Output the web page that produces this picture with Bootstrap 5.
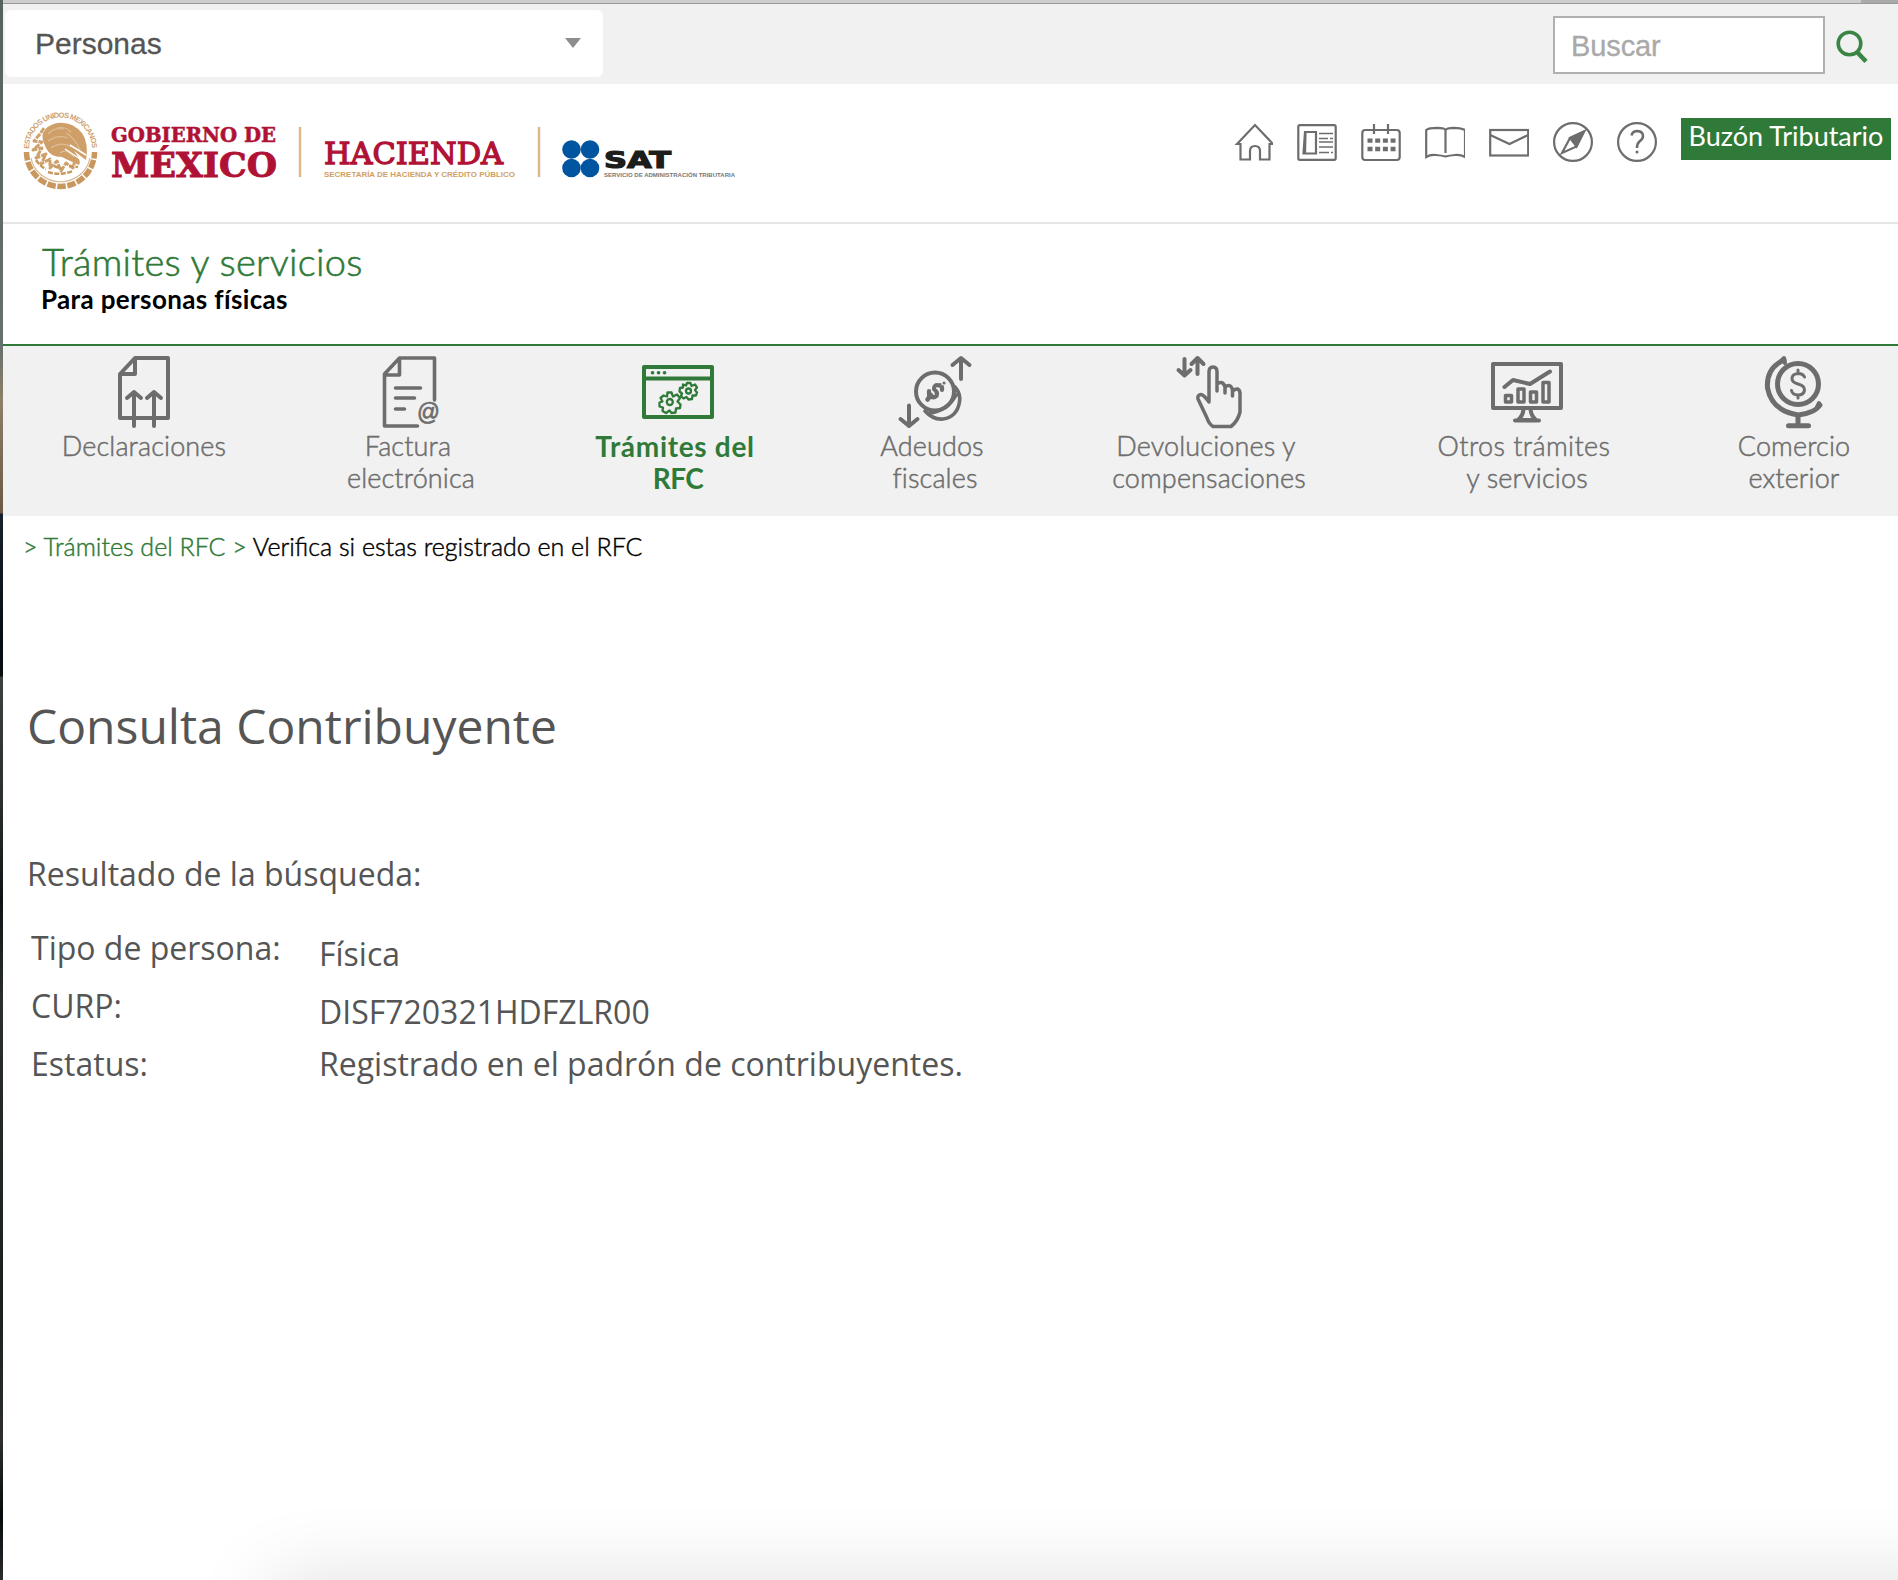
<!DOCTYPE html>
<html lang="es">
<head>
<meta charset="utf-8">
<title>SAT - Consulta Contribuyente</title>
<link href="https://cdn.jsdelivr.net/npm/bootstrap@5.3.0/dist/css/bootstrap.min.css" rel="stylesheet">
<style>
:root{--verde:#2f7a38;--gris:#6d6d6d}
html,body{height:1580px;overflow:hidden}
body{font-family:"Open Sans","Noto Sans",sans-serif;color:#555;background:#fff}
main{min-width:0}
.desk-edge{width:3px;flex:none;background:linear-gradient(#55625f 0,#66706d 345px,#8d8066 400px,#6b5846 513px,#18222c 514px,#060d14 640px,#0a0f13 676px,#3b413c 677px,#2b2f2e 800px,#0e1416 900px,#2b2f2e 1000px,#1a1f20 1300px,#2c2f2e 1440px,#050a0c 1515px,#2a2c2d 1580px)}
.window-top{height:4px;background:linear-gradient(90deg,#cdcdcd 1858px,#aaa 1858px);border-bottom:1px solid #999}
.utility{height:80px;background:#f1f1f1}
.perfil{width:598px;height:67px;margin:6px 0 0 2px;background:#fff;border-radius:6px;padding:0 22px 0 30px;font:30px "Liberation Sans",Arial,sans-serif;color:#555;letter-spacing:0;line-height:67px;border:0;-webkit-text-stroke:.3px}
.perfil svg{margin-top:-2px}
.buscar{width:272px;height:58px;border:2px solid #b0b0b0;border-radius:0;padding:2px 16px 0;font:29px "Liberation Sans",Arial,sans-serif;letter-spacing:-.1px;margin-top:12px}
.buscar::placeholder{color:#a9a9a9;opacity:1;-webkit-text-stroke:.3px}
.marca{height:140px;border-bottom:2px solid #e5e5e5}
.ico{width:40px;height:42px;fill:none;stroke:var(--gris);stroke-width:2.2}
.buzon{width:210px;height:42px;background:var(--verde);color:#fff;border-radius:0;border:0;padding:0;font:27px/36px Lato,sans-serif;text-align:center;margin:-3px 7px 0 24px;white-space:nowrap;display:block}
.titulo{height:122px;padding:17px 0 0 39px;border-bottom:2px solid var(--verde);font-family:Lato,sans-serif}
.titulo h1{font-size:38px;font-weight:300;line-height:40px;color:var(--verde);margin:0 0 3px;letter-spacing:.27px;-webkit-text-stroke:.6px}
.titulo h2{font-size:26px;font-weight:700;line-height:30px;color:#000;margin:0 0 0 -1px;letter-spacing:.36px}
.menu{height:170px;background:#f1f1f1;display:grid;grid-template-columns:282px 252px 282px 232px 316px 320px 214px;overflow:hidden;padding-top:9px;font:300 27px/32px Lato,sans-serif;color:var(--gris)}
.menu a{color:inherit;text-decoration:none;text-align:center;letter-spacing:.12px}
.menu a span{display:block;-webkit-text-stroke:.5px}
.menu svg{display:block;margin:0 auto 1px;width:76px;height:74px;fill:none;stroke:var(--gris);stroke-width:4;stroke-linecap:round;stroke-linejoin:round}
.menu .l1{padding-right:6px}
.menu .ancho{letter-spacing:.4px}
.menu a.activo{color:var(--verde);font-weight:700}
.menu .activo span{font-size:28px;letter-spacing:.7px;-webkit-text-stroke:0}
.menu .activo .rfc{letter-spacing:-.6px}
.menu .activo svg{stroke:var(--verde)}
.migas{padding:15px 0 0 20px;font:300 25px/30px Lato,sans-serif;color:#000;white-space:pre;-webkit-text-stroke:.45px}
.migas b,.migas a{font-weight:300;color:var(--verde);text-decoration:none}
.contenido h3{font-size:48px;font-weight:400;line-height:60px;margin:135px 0 0 24px}
.contenido p{font-size:32px;line-height:40px;margin:98px 0 0 24px}
.datos{display:grid;grid-template-columns:288px 1fr;grid-auto-rows:58px;margin:34px 0 0 28px;font-size:32px;line-height:40px}
.datos dt{font-weight:400}.datos dd{margin:0}
.datos .baja{padding-top:6px}
.sombra{position:fixed;left:272px;right:-120px;top:1580px;height:100px;box-shadow:0 0 80px rgba(0,0,0,.13)}
</style>
<script src="https://cdn.jsdelivr.net/npm/bootstrap@5.3.0/dist/js/bootstrap.bundle.min.js"></script>
</head>
<body class="d-flex">
<div class="desk-edge"></div>
<main class="flex-grow-1">
  <div class="window-top"></div>
  <div class="utility d-flex">
    <button class="perfil d-flex justify-content-between align-items-center">Personas<svg width="16" height="10"><path d="M0 0H16L8 10Z" fill="#8d8d8d"/></svg></button>
    <form class="ms-auto d-flex">
      <input class="buscar" placeholder="Buscar">
      <svg width="32" height="34" viewBox="0 0 32 34" style="margin:26px 30px 0 11px" fill="none" stroke="#3a8545" stroke-width="3.600"><circle cx="13.5" cy="13.5" r="11.300"/><path d="M21.5 22.5L30 31.5" stroke-width="4.600"/></svg>
    </form>
  </div>

  <header class="marca d-flex">
    <svg width="760" height="110" viewBox="3 84 760 110">
      <defs><path id="aro" d="M29 149A31.500 31.500 0 0 1 92 149"/></defs>
      <g fill="#c9985f">
        <text font-family="Liberation Sans" font-weight="700" font-size="7.500" fill="#cfa372"><textPath href="#aro" textLength="98">ESTADOS UNIDOS MEXICANOS</textPath></text>
        <path d="M26.500 152A34 34.500 0 0 0 94.500 152" fill="none" stroke="#c9985f" stroke-width="5.500" stroke-dasharray="8.500 1.600"/>
        <path d="M31 158A30 29 0 0 0 90 158" fill="none" stroke="#d9b78f" stroke-width="1.200"/>
        <path d="M43 133Q47 125 57 123Q72 121 82 133Q89 143 86 160L74 151Q82 161 79 165Q68 160 62 157Q50 157 46 148Q41 138 43 133Z" fill="#cf9f69"/>
        <path d="M44 128L40 134L34 141L42 142L33 150L42 148L36 158L46 154L41 164L50 159L50 168L57 161L61 171L66 163L73 168L75 160" fill="none" stroke="#cea06c" stroke-width="3" stroke-linejoin="round" stroke-dasharray="6 1"/>
        <path d="M36 160q5 7 10 9M48 172q12 4 25-1M54 166l8 3M69 166l9 1" fill="none" stroke="#c9985f" stroke-width="2.500" stroke-dasharray="5 1.500"/>
        <path d="M48 134q6-7 16-5M48 141q10-7 20-3M51 148q10-7 21-1M66 133q9 5 14 17M60 153q6-5 14 4M57 128q8-2 14 4" fill="none" stroke="#dfbd93" stroke-width="1.200"/>
        <path d="M65 149L86 163M70 145L86 155" stroke="#fff" stroke-width="1.500"/>
      </g>
      <g fill="#b01235" stroke="#b01235" font-family="DejaVu Serif" font-weight="700">
        <text x="111" y="141.500" font-size="19.500" stroke-width=".5" textLength="165" lengthAdjust="spacingAndGlyphs">GOBIERNO DE</text>
        <text x="111" y="177" font-size="33" stroke-width=".9" textLength="166" lengthAdjust="spacingAndGlyphs">MÉXICO</text>
        <text x="324" y="163.500" font-size="30" font-weight="400" stroke-width="1.300" textLength="179" lengthAdjust="spacingAndGlyphs">HACIENDA</text>
      </g>
      <path d="M300 127V177M539 127V177" stroke="#ddb88c" stroke-width="2.500"/>
      <text x="324" y="177" font-family="Liberation Sans" font-weight="700" font-size="7.500" fill="#d0a062" textLength="191" lengthAdjust="spacingAndGlyphs">SECRETARÍA DE HACIENDA Y CRÉDITO PÚBLICO</text>
      <g fill="#0055a0"><circle cx="571.500" cy="149.500" r="9.300"/><circle cx="590" cy="149.500" r="9.300"/><circle cx="571.500" cy="168" r="9.300"/><circle cx="590" cy="168" r="9.300"/></g>
      <text x="604" y="167.500" font-family="DejaVu Sans" font-weight="700" font-size="22.500" fill="#1d1d1b" stroke="#1d1d1b" stroke-width="1.200" textLength="67" lengthAdjust="spacingAndGlyphs">SAT</text>
      <text x="604" y="177" font-family="Liberation Sans" font-weight="700" font-size="5.600" fill="#777" textLength="131" lengthAdjust="spacingAndGlyphs">SERVICIO DE ADMINISTRACIÓN TRIBUTARIA</text>
    </svg>
    <div class="ms-auto d-flex" style="padding-top:37px">
      <div class="d-flex gap-4">
        <svg class="ico" viewBox="0 0 40 42"><path d="M4 23L22 4L40 23H36.500V38.500H27V30Q27 25 22 25Q17 25 17 30V38.500H7.500V23Z"/></svg>
        <svg class="ico" viewBox="0 0 40 42"><rect x="1.300" y="4.200" width="37.400" height="34.600" rx="1.500"/><path d="M8 11H19V32.500H6.500ZM8.500 11L8 32" /><path d="M22 12.500H36M22 17.500H31M33 17.500H36M22 21H36M22 26H36M22 31.500H32M34 31.500H36" stroke-width="1.700"/></svg>
        <svg class="ico" viewBox="0 0 40 42"><rect x="1.300" y="9" width="37.400" height="30" rx="3"/><path d="M13 3V13M27 3V13"/><path d="M6.500 19.700H34.500M6.500 28H34.500" stroke-width="4.300" stroke-dasharray="5 2.700"/></svg>
        <svg class="ico" viewBox="0 0 40 42"><path d="M20.500 9Q20 7 12 6.800Q4 6.800 1.200 9V36Q5 33.500 11 34Q17 34.500 20.500 35.500Q24 34.500 30 34Q36 33.500 40 36V9Q36 6.800 29 6.800Q21.500 7 20.500 9V32"/></svg>
        <svg class="ico" viewBox="0 0 40 42"><rect x="1.200" y="9" width="38" height="25.500"/><path d="M1.200 14L20.500 23L39.200 14"/></svg>
        <svg class="ico" viewBox="0 0 40 42"><circle cx="20" cy="21" r="18.900"/><path d="M31 10.500L17 17L9 32L23.500 25.500Z"/><path d="M31 10.500L17 17L23.500 25.500Z" fill="#6d6d6d"/></svg>
        <svg class="ico" viewBox="0 0 40 42"><circle cx="20" cy="21" r="18.900"/><path d="M14.500 14.500Q15.500 10 20.500 10Q26 10.500 26 15Q26 18 22.500 20.500Q20 22.500 20 27" stroke-width="2.500"/><circle cx="20" cy="31" r="1.500" fill="#6d6d6d" stroke="none"/></svg>
      </div>
      <a href="#" class="buzon text-decoration-none">Buzón Tributario</a>
    </div>
  </header>

  <section class="titulo"><h1>Trámites y servicios</h1><h2>Para personas físicas</h2></section>

  <nav class="menu">
    <a href="#"><svg viewBox="106 355 76 74"><path stroke-linecap="butt" d="M135 358H168V418H120V374L135 358V374H120"/><path d="M134 426V392M154 426V392M127 398L134 392L141 398M147 398L154 392L161 398"/></svg><span>Declaraciones</span></a>
    <a href="#"><svg viewBox="373.500 355 76 74"><path d="M435 400V358H400L385 374V426H418M400 358V375H385M396 388H421M396 398H415M396 409H405" stroke-width="3.600"/><text x="417.500" y="420" font-size="23" font-family="Liberation Sans" fill="#6d6d6d" stroke-width=".7" textLength="23" lengthAdjust="spacingAndGlyphs">@</text></svg><span class="l1">Factura</span><span>electrónica</span></a>
    <a href="#" class="activo"><svg viewBox="640 355 76 74"><path d="M644 367H712V417H644ZM644 378.500H712"/><path d="M652.500 372.800h.1M658.500 372.800h.1M664.500 372.800h.1" stroke-width="3.600"/><g stroke-width="2.300"><path d="M667.500 392.500L671.500 392.500L673 396.500L677 394.500L680 398L677.500 401.500L680.500 404.500L680 408L676 408.500L675.500 412.500L671.500 413L669.500 410.500L666 413L662.500 411L663 407.500L659.500 406.500L659.500 402.500L662.500 401.500L660.500 398L663.500 395.500L667 396.500Z"/><circle cx="669.800" cy="402" r="3"/><path d="M687 383L690.500 383L691.500 386L695 384.500L697 387.500L695 390L697 392.500L696 395.500L692.500 395.500L692 399L688.500 399.500L686.500 397L683.500 398.500L681 396L682 393.500L679.500 391.500L680 388L683 387.500L683 384.500L686 385.500Z"/><circle cx="688.500" cy="391" r="2.500"/></g></svg><span class="l1">Trámites del</span><span class="rfc">RFC</span></a>
    <a href="#"><svg viewBox="897 355 76 74"><circle cx="935" cy="391.500" r="19"/><path d="M955 387Q961 394 959.500 402Q957 417 943 419Q933 420 925 411M929 413Q947 411 956 395" stroke-width="3.600"/><path d="M961 379V358.500M952.500 365L961 358L969.500 365M909 405.500V425.500M900.500 419L909 426L917.500 419"/><path d="M927.500 399.500L931 395" stroke-width="4.500"/><path d="M929 391V395Q933 399 936.500 396Q938 392 934 389Q934 384 939 385.500M942 390V387" stroke-width="4.200"/><path d="M940 384.500h.1M944 383h.1" stroke-width="3"/></svg><span class="l1">Adeudos</span><span>fiscales</span></a>
    <a href="#"><svg viewBox="1171 355 76 74"><path d="M1184.500 359V375M1178.500 370L1184.500 375.500L1190.500 370M1197.500 374V358M1191.500 364L1197.500 358L1203.500 364"/><path d="M1209 401V372Q1209 367 1213 367Q1217 367 1217 372V391V384Q1223 380 1225 387V393V387Q1231 383 1232.500 390V396V391Q1239 386 1240 393V412Q1238 421 1231 426.500H1213Q1209 424 1207 418L1198 399Q1197 395 1201 394.500Q1204 395 1209 402" stroke-width="3.500"/></svg><span class="l1">Devoluciones y</span><span>compensaciones</span></a>
    <a href="#"><svg viewBox="1489 355 76 74"><path d="M1493 364H1561V408H1493ZM1523.500 409Q1523 416 1518 420H1536Q1531 416 1530.500 409M1515 420.500H1539"/><path d="M1504.500 387L1513 380L1530 384L1550 371.500"/><path d="M1505.500 395.500H1511.500V402H1505.500ZM1518 389H1524V402H1518ZM1530.500 392H1536.500V402H1530.500ZM1543 382.500H1549V402H1543Z" stroke-width="3.500"/></svg><span class="l1 ancho">Otros trámites</span><span>y servicios</span></a>
    <a href="#"><svg viewBox="1756 355 76 74"><circle cx="1798" cy="384" r="20.500" stroke-width="5"/><path d="M1784 360Q1766 368 1767.500 388Q1772 411 1798 415Q1815 413 1820 405" stroke-width="5"/><path d="M1781 361L1784 358L1785 363M1817 407L1819 403" stroke-width="4"/><path d="M1798 416V424M1788.500 425.800H1808.500" stroke-width="5"/><path d="M1804.500 377Q1803 373.500 1798 373.500Q1792 374 1792 378.500Q1792 382.500 1798 384Q1804.500 385.500 1804.500 390Q1804 395 1798 395Q1792.500 395 1791.500 390.500M1798 370V373M1798 395V398" stroke-width="3"/></svg><span>Comercio</span><span>exterior</span></a>
  </nav>

  <div class="migas"><b>&gt;</b> <a href="#">Trámites del RFC</a> <b>&gt;</b> Verifica si estas registrado en el RFC</div>

  <section class="contenido">
    <h3>Consulta Contribuyente</h3>
    <p>Resultado de la búsqueda:</p>
    <dl class="datos">
      <dt>Tipo de persona:</dt><dd class="baja">Física</dd>
      <dt>CURP:</dt><dd class="baja">DISF720321HDFZLR00</dd>
      <dt>Estatus:</dt><dd>Registrado en el padrón de contribuyentes.</dd>
    </dl>
  </section>
</main>
<div class="sombra"></div>
</body>
</html>
